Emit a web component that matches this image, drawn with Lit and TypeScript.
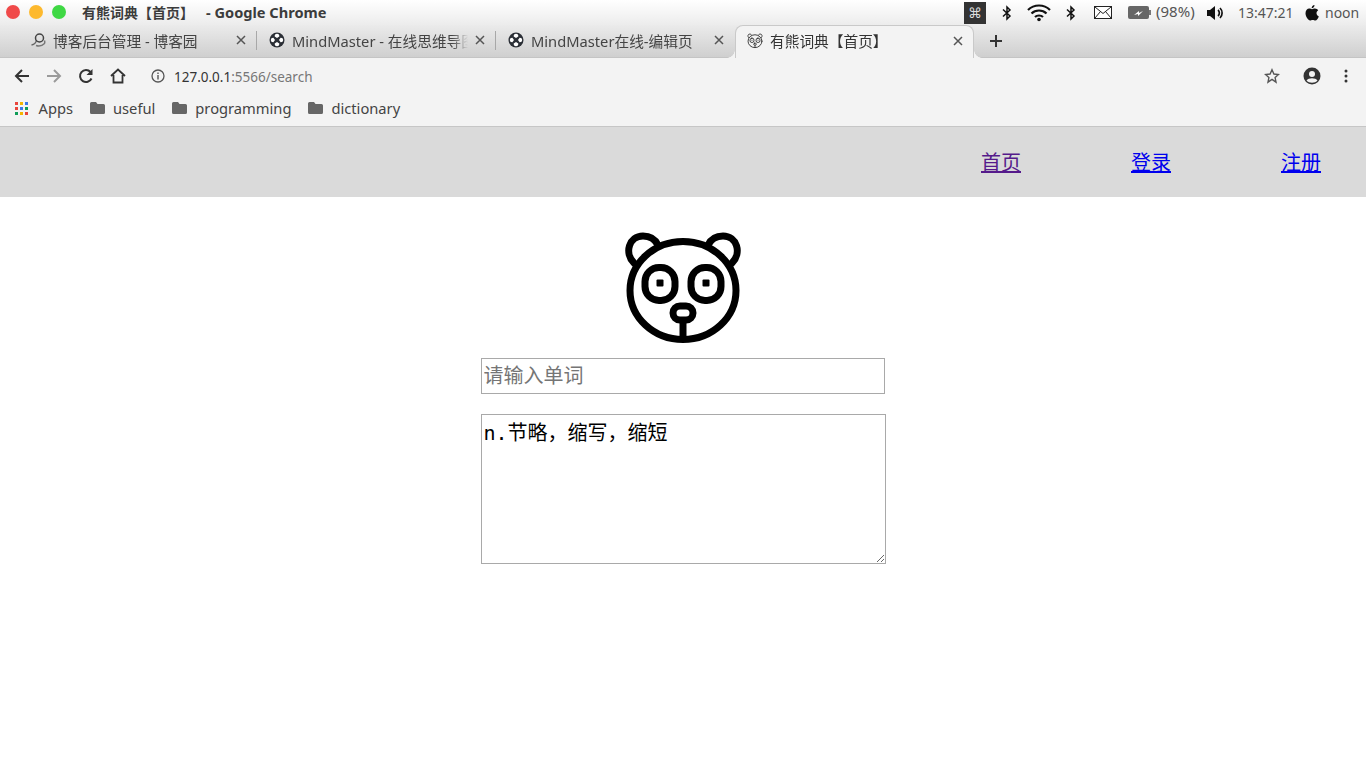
import { LitElement, html, css, svg } from "lit";
import { customElement } from "lit/decorators.js";

const globe = svg`<svg class="ic" width="16" height="16" viewBox="0 0 16 16"><circle cx="8" cy="8" r="7.500" fill="#2b2f36"/><path d="M8 1.800a2.400 2.400 0 012.300 2.600L8 6 5.700 4.400A2.400 2.400 0 018 1.800zM8 14.200a2.400 2.400 0 01-2.300-2.600L8 10l2.300 1.600A2.400 2.400 0 018 14.200zM1.800 8a2.400 2.400 0 012.600-2.300L6 8l-1.600 2.300A2.400 2.400 0 011.800 8zM14.200 8a2.400 2.400 0 01-2.600 2.300L10 8l1.600-2.300A2.400 2.400 0 0114.200 8z" fill="#fff"/></svg>`;
const cnblog = svg`<svg class="ic" width="16" height="16" viewBox="0 0 16 16"><path d="M1.500 13c3-.5 4.500-2 5-5" stroke="#666" stroke-width="1.500" fill="none"/><circle cx="9.500" cy="6" r="4" stroke="#444" stroke-width="1.500" fill="none"/><path d="M6 13.500c3 1 6 .5 8.500-2 .5-1 .3-2 0-3" stroke="#777" stroke-width="1.500" fill="none"/></svg>`;
const face = svg`
  <g fill="none" stroke="currentColor" stroke-width="7" stroke-linecap="round" stroke-linejoin="round">
    <ellipse cx="73" cy="70.500" rx="53" ry="49"/>
    <path d="M24 43C14 33 19 16 33 16c7 0 12 3 15 9"/>
    <path d="M122 43c10-10 5-27-9-27-7 0-12 3-15 9"/>
    <rect x="35" y="47.500" width="30" height="33" rx="14"/>
    <rect x="81" y="47.500" width="30" height="33" rx="14"/>
    <rect x="63" y="86" width="20" height="14" rx="7"/>
    <path d="M73 100v19" stroke-linecap="butt"/>
  </g>
  <rect x="46.500" y="59.500" width="7" height="7" rx="1" fill="currentColor"/>
  <rect x="92.500" y="59.500" width="7" height="7" rx="1" fill="currentColor"/>`;
const bear = svg`<svg class="ic" width="16" height="16" viewBox="12 10 122 118" style="color:#333">${face}</svg>`;

const tabs = [
  { icon: cnblog, label: "博客后台管理 - 博客园" },
  { icon: globe, label: "MindMaster - 在线思维导图" },
  { icon: globe, label: "MindMaster在线-编辑页" },
  { icon: bear, label: "有熊词典【首页】", active: true },
];
const folders = ["useful", "programming", "dictionary"];
const dots = ["#e8453c", "#f4b400", "#3b78e7", "#e8453c", "#3b78e7", "#0f9d58", "#0f9d58", "#f4b400", "#e8453c"];

const bt = svg`<svg class="ic" width="10" height="16" viewBox="0 0 10 16"><path d="M1 4.500l7 6.500-3 3V2l3 3-7 6.500" fill="none" stroke="#111" stroke-width="1.500"/></svg>`;

@customElement("app-root")
export class AppRoot extends LitElement {
  static styles = css`
    :host { display: block; width: 1366px; height: 768px; overflow: hidden; background: #fff; font-family: "Noto Sans", "Noto Sans CJK SC", sans-serif; }
    .ic { display: block; flex: none; }
    .titlebar { height: 25px; display: flex; align-items: center; background: linear-gradient(#fff, #ececec); padding-left: 6px; }
    .lights { display: flex; gap: 9px; margin-bottom: 1px; }
    .light { width: 14px; height: 14px; border-radius: 50%; }
    .title { margin: 0 0 2px 16px; font-size: 14px; font-weight: 700; color: #3c3c3c; white-space: pre; flex: 1; }
    .title span { margin-left: 12px; font-size: 14.600px; }
    .status { display: flex; align-items: center; font-size: 14px; color: #555; height: 25px; }
    .cmd { width: 22px; height: 22px; background: #333; color: #ddd; display: flex; align-items: center; justify-content: center; font-size: 14px; font-family: "DejaVu Sans", sans-serif; margin-right: 16px; }
    .status .t { white-space: nowrap; margin-bottom: 1px; }
    .status .pct { margin: 0 0 3px 5px; font-size: 15px; width: 39px; }
    .status .clock { margin-left: 13px; width: 55px; }
    .status .user { margin-left: 6px; margin-right: 6px; width: 35px; }
    .wifi { margin-left: 15px; }
    .bt2 { margin-left: 15px; }
    .mail { margin-left: 18px; }
    .batt { margin-left: 16px; }
    .vol { margin-left: 12px; }
    .apple { margin-left: 12px; }
    .tabstrip { height: 33px; display: flex; padding-left: 18px; background: linear-gradient(#ebebeb, #cfcfcf); border-bottom: 1px solid #c4c4c4; box-sizing: border-box; }
    .tab { width: 239px; height: 32px; box-sizing: border-box; display: flex; align-items: center; padding: 0 0 2px 12px; position: relative; font-size: 14.700px; color: #444; }
    .tab + .tab:not(.active)::before { content: ""; position: absolute; left: -1px; top: 6px; height: 19px; width: 1px; background: #a8a8a8; }
    .tab.active { background: #f3f3f3; border: 1px solid #c9c9c9; border-bottom: 0; border-radius: 8px 8px 0 0; color: #333; height: 33px; padding: 0 0 3px 11px; z-index: 1; }
    .tab.active::before, .tab.active::after { content: ""; position: absolute; bottom: 0; width: 8px; height: 8px; }
    .tab.active::before { left: -9px; background: radial-gradient(circle at 0 0, transparent 7.500px, #f3f3f3 8px); }
    .tab.active::after { right: -9px; background: radial-gradient(circle at 100% 0, transparent 7.500px, #f3f3f3 8px); }
    .tab .lbl { margin-left: 7px; width: 176px; overflow: hidden; white-space: nowrap; flex: none; -webkit-mask-image: linear-gradient(to right, #000 160px, transparent 176px); mask-image: linear-gradient(to right, #000 160px, transparent 176px); }
    .tab .x { margin-left: 7px; }
    .plus { margin: 9px 0 0 15px; }
    .toolbar { height: 36px; background: #f3f3f3; display: flex; align-items: center; padding-left: 14px; }
    .nav { display: flex; gap: 16px; }
    .url { margin-left: 25px; display: flex; align-items: center; gap: 9px; font-size: 13.500px; color: #333; flex: 1; }
    .url > span { padding-top: 1px; }
    .url span span { color: #777; }
    .tools { display: flex; align-items: center; padding-right: 18px; }
    .account, .menu { margin-left: 23px; }
    .bookmarks { height: 33px; box-sizing: border-box; background: #f3f3f3; border-bottom: 1px solid #c6c6c6; display: flex; align-items: center; padding: 0 0 4px 15px; font-size: 14.700px; color: #444; }
    .grid { width: 13px; height: 13px; display: grid; grid-template-columns: repeat(3, 3px); gap: 2px; margin-right: 10.500px; }
    .grid i { display: block; width: 3px; height: 3px; }
    .bm { margin-right: 17px; display: flex; align-items: center; gap: 8px; }
    header { height: 70px; box-sizing: border-box; background: #dadada; display: flex; justify-content: flex-end; align-items: center; gap: 110px; padding: 0 45px 2px 0; font-size: 20px; font-family: "Noto Sans CJK SC", sans-serif; }
    a { color: #0000ee; }
    a.seen { color: #551a8b; }
    main { display: flex; flex-direction: column; align-items: center; padding-top: 23px; }
    .logo { display: block; color: #000; }
    .form { width: 405px; margin-top: 8px; display: flex; flex-direction: column; gap: 20px; align-items: flex-start; }
    input, textarea { box-sizing: border-box; border: 1px solid #a9a9a9; margin: 0; padding: 2px; font-size: 20px; background: #fff; outline: none; }
    input { width: 404px; height: 36px; padding: 0 2px 4px; font-family: "Noto Sans CJK SC", sans-serif; }
    input::placeholder { color: #757575; }
    textarea { width: 405px; height: 150px; font-family: "DejaVu Sans Mono", "Noto Sans CJK SC", monospace; color: #000; display: block; }
  `;

  render() {
    return html`
      <div class="titlebar">
        <div class="lights">
          <div class="light" style="background:#f04a4a"></div>
          <div class="light" style="background:#fdb92e"></div>
          <div class="light" style="background:#3fd844"></div>
        </div>
        <div class="title">有熊词典【首页】<span>- Google Chrome</span></div>
        <div class="status">
          <div class="cmd">⌘</div>
          ${bt}
          <svg class="ic wifi" width="24" height="18" viewBox="0 0 24 18"><g fill="none" stroke="#111" stroke-width="2.200"><path d="M1 6c6-6 16-6 22 0"/><path d="M4.500 9.500c4-4 11-4 15 0"/><path d="M8 13c2-2 6-2 8 0"/></g><circle cx="12" cy="15.500" r="1.800" fill="#111"/></svg>
          <div class="bt2">${bt}</div>
          <svg class="ic mail" width="18" height="13" viewBox="0 0 18 13"><rect x=".5" y=".5" width="17" height="12" fill="#fff" stroke="#222"/><path d="M1 1l8 6.500L17 1M1 12l5.500-6.500M17 12l-5.500-6.500" fill="none" stroke="#222"/></svg>
          <svg class="ic batt" width="23" height="13" viewBox="0 0 23 13"><rect width="21" height="13" rx="2" fill="#666"/><rect x="21" y="4" width="2" height="5" fill="#777"/><path d="M6 9l5-4v2l4-2-5 5V8z" fill="#fff"/></svg>
          <span class="t pct">(98%)</span>
          <svg class="ic vol" width="18" height="16" viewBox="0 0 18 16"><path d="M0 5h3l5-4v14l-5-4H0z" fill="#111"/><path d="M11 5a4 4 0 010 6M13 3a7 7 0 010 10" fill="none" stroke="#111" stroke-width="1.700"/></svg>
          <span class="t clock">13:47:21</span>
          <svg class="ic apple" width="14" height="16" viewBox="0 0 14 16"><path d="M9.500 0c.1 1.700-1.200 3.300-2.900 3.300C6.500 1.700 8 .2 9.500 0zM7 4.200c.8 0 1.700-.7 3-.7 1.300 0 2.500.7 3.200 1.800-2.500 1.500-2.100 5 .6 6.100-.7 1.900-2.100 4.200-3.500 4.200-1 0-1.400-.6-2.600-.6s-1.700.6-2.600.6C3.200 15.600.5 11.500.5 8.300c0-3 1.900-4.700 3.700-4.700 1.200 0 2 .6 2.800.6z" fill="#111"/></svg>
          <span class="t user">noon</span>
        </div>
      </div>
      <div class="tabstrip">
        ${tabs.map(t => html`
          <div class="tab ${t.active ? "active" : ""}">
            ${t.icon}
            <span class="lbl">${t.label}</span>
            <svg class="ic x" width="10" height="10" viewBox="0 0 10 10"><path d="M1 1l8 8M9 1l-8 8" stroke="#555" stroke-width="1.500"/></svg>
          </div>`)}
        <svg class="ic plus" width="14" height="14" viewBox="0 0 14 14"><path d="M7 1v12M1 7h12" stroke="#333" stroke-width="2"/></svg>
      </div>
      <div class="toolbar">
        <div class="nav">
          <svg class="ic" width="16" height="16" viewBox="0 0 16 16"><path d="M15 8H2M8 2L2 8l6 6" fill="none" stroke="#333" stroke-width="2"/></svg>
          <svg class="ic" width="16" height="16" viewBox="0 0 16 16"><path d="M1 8h13M8 2l6 6-6 6" fill="none" stroke="#9a9a9a" stroke-width="2"/></svg>
          <svg class="ic" width="16" height="16" viewBox="0 0 16 16"><path d="M13.500 10.500A6 6 0 1112.500 4" fill="none" stroke="#333" stroke-width="2"/><path d="M14.500 1v6h-6z" fill="#333"/></svg>
          <svg class="ic" width="16" height="16" viewBox="0 0 16 16"><path d="M1 8l7-6.500L15 8M3.500 7v7.500h9V7" fill="none" stroke="#333" stroke-width="1.800"/></svg>
        </div>
        <div class="url">
          <svg class="ic" width="14" height="14" viewBox="0 0 14 14"><circle cx="7" cy="7" r="6" fill="none" stroke="#555" stroke-width="1.300"/><path d="M7 6v4.500M7 3.500v1.500" stroke="#555" stroke-width="1.400"/></svg>
          <span>127.0.0.1<span>:5566/search</span></span>
        </div>
        <div class="tools">
          <svg class="ic" width="16" height="16" viewBox="0 0 16 16"><path d="M8 1.800l1.900 4.200 4.600.5-3.400 3.100.9 4.500L8 11.400l-4 2.700.9-4.500L1.500 6.500 6.100 6z" fill="none" stroke="#555" stroke-width="1.400"/></svg>
          <svg class="ic account" width="18" height="18" viewBox="0 0 18 18"><circle cx="9" cy="9" r="8.500" fill="#333"/><circle cx="9" cy="7" r="3" fill="#f3f3f3"/><path d="M3.500 13.500c2-3 9-3 11 0-2.500 3-8.500 3-11 0z" fill="#f3f3f3"/></svg>
          <svg class="ic menu" width="4" height="14" viewBox="0 0 4 14"><circle cx="2" cy="2" r="1.500" fill="#333"/><circle cx="2" cy="7" r="1.500" fill="#333"/><circle cx="2" cy="12" r="1.500" fill="#333"/></svg>
        </div>
      </div>
      <div class="bookmarks">
        <div class="grid">${dots.map(c => html`<i style="background:${c}"></i>`)}</div>
        <div class="bm">Apps</div>
        ${folders.map(f => html`<div class="bm">
          <svg class="ic" width="15" height="12" viewBox="0 0 15 12"><path d="M0 1.500A1.500 1.500 0 011.500 0H6l1.500 2h6A1.500 1.500 0 0115 3.500v7a1.500 1.500 0 01-1.500 1.500h-12A1.500 1.500 0 010 10.500z" fill="#666"/></svg>
          <span>${f}</span></div>`)}
      </div>
      <header>
        <a class="seen" href="#">首页</a>
        <a href="#">登录</a>
        <a href="#">注册</a>
      </header>
      <main>
        <svg class="logo" width="146" height="130" viewBox="0 0 146 130">${face}</svg>
        <div class="form">
          <input placeholder="请输入单词" />
          <textarea .value=${"n.节略，缩写，缩短"}></textarea>
        </div>
      </main>
    `;
  }
}
